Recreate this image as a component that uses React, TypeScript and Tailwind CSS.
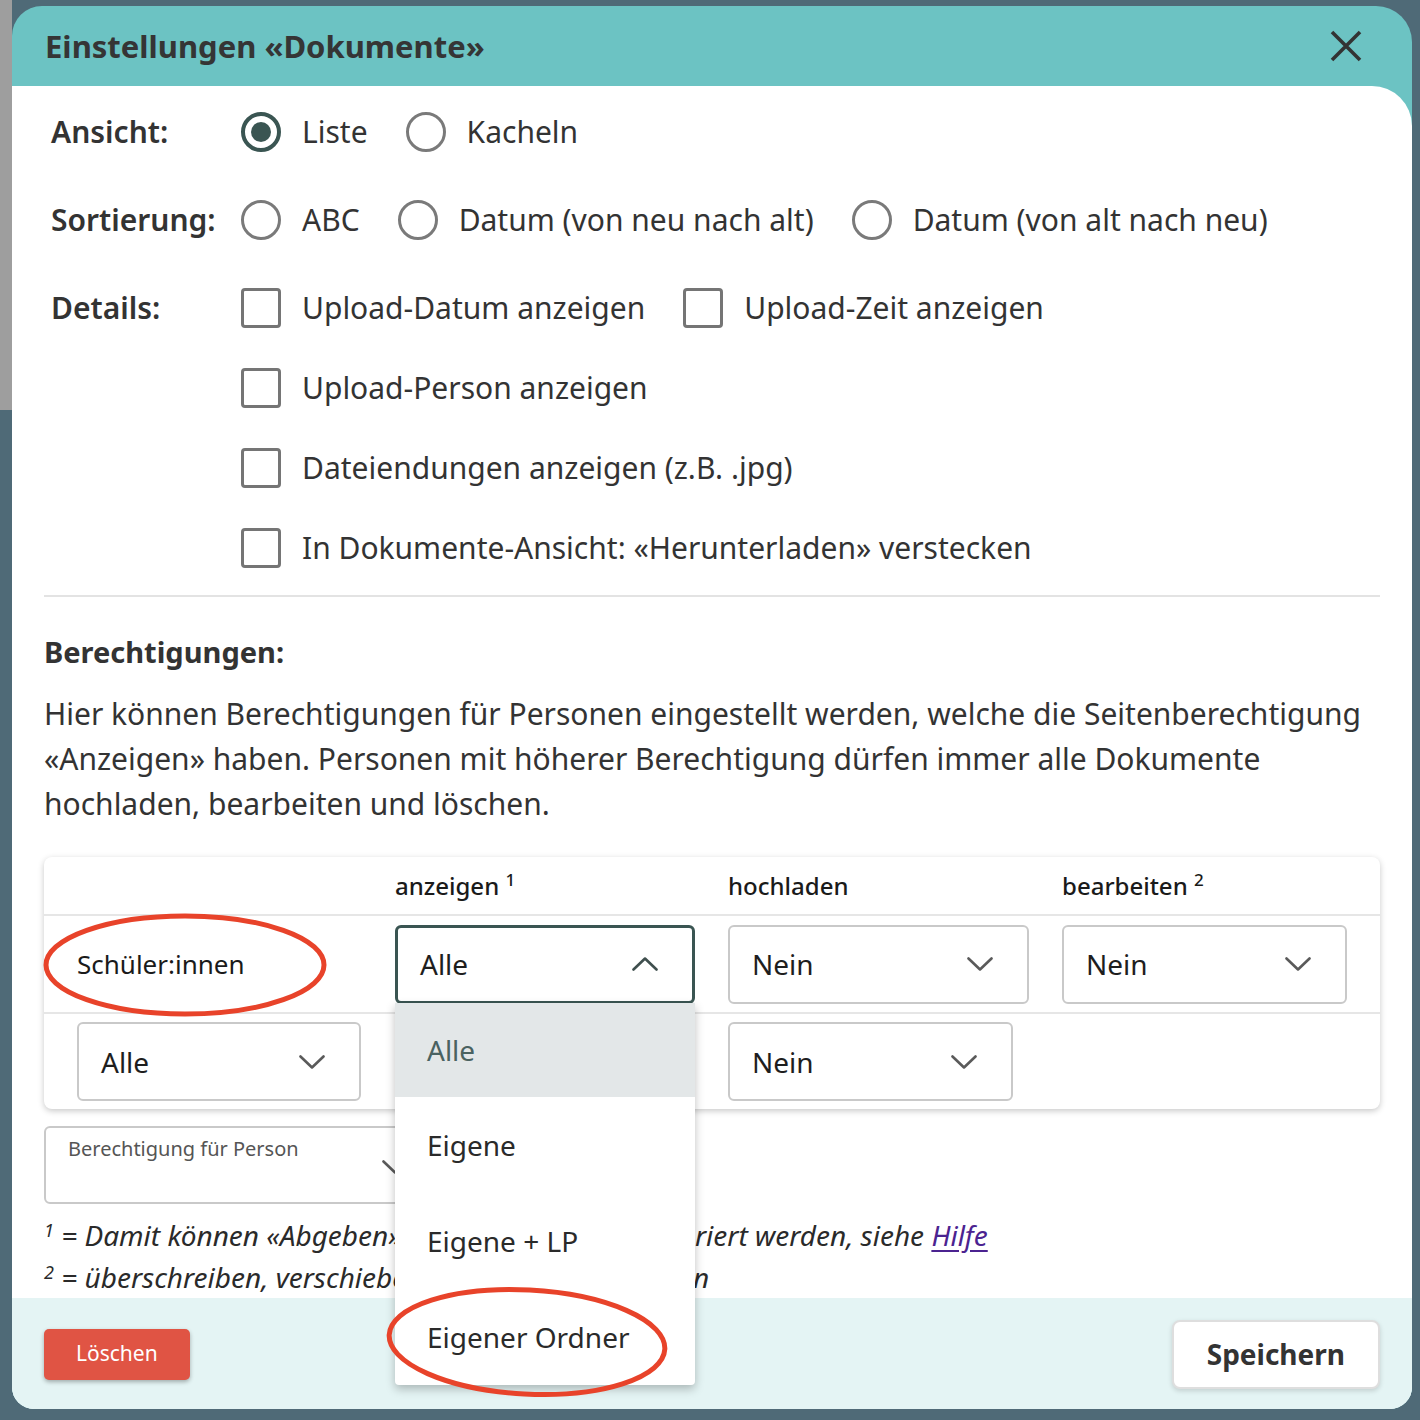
import React from "react";

const FONT = { fontFamily: "'Noto Sans', Roboto, sans-serif" };

function Chevron({ up = false }: { up?: boolean }) {
  return (
    <svg width="26" height="14" viewBox="0 0 26 14" fill="none">
      <path
        d={up ? "M1.5 12.5 L13 1.5 L24.5 12.5" : "M1.5 1.5 L13 12.5 L24.5 1.5"}
        stroke={up ? "#3f4f4e" : "#5a5a5a"}
        strokeWidth="2.6"
        strokeLinecap="round"
        strokeLinejoin="round"
      />
    </svg>
  );
}

function Radio({ label, checked = false }: { label: string; checked?: boolean }) {
  return (
    <div className="h-[40px] flex items-center gap-[21px]">
      {checked ? (
        <span className="w-[40px] h-[40px] rounded-full border-[4px] border-[#3a5552] flex items-center justify-center">
          <span className="w-[20px] h-[20px] rounded-full bg-[#3a5552]" />
        </span>
      ) : (
        <span className="w-[40px] h-[40px] rounded-full border-[3px] border-[#7a7a7a]" />
      )}
      <span className="text-[30px] leading-none text-[#333]">{label}</span>
    </div>
  );
}

function Check({ label }: { label: string }) {
  return (
    <div className="h-[40px] flex items-center gap-[21px]">
      <span className="w-[40px] h-[40px] rounded-[4px] border-[3px] border-[#757575]" />
      <span className="text-[30px] leading-none text-[#333]">{label}</span>
    </div>
  );
}

function Select({
  value,
  width,
  open = false,
}: {
  value: string;
  width: string;
  open?: boolean;
}) {
  return (
    <div
      className={`${width} h-[79px] rounded-[6px] flex items-center justify-between pl-[22px] pr-[34px] bg-white ${
        open ? "border-[3px] border-[#3a5552]" : "border-2 border-[#c9c9c9]"
      }`}
    >
      <span className="text-[28px] text-[#1e1e1e]">{value}</span>
      <Chevron up={open} />
    </div>
  );
}

const MENU = ["Alle", "Eigene", "Eigene + LP", "Eigener Ordner"];

export default function App() {
  return (
    <div className="w-[1420px] h-[1420px] bg-[#4f6a77] flex" style={FONT}>
      <div className="w-[12px] flex flex-col">
        <div className="h-[410px] bg-[#9e9e9e]" />
      </div>

      <div className="pt-[6px]">
        <div className="relative w-[1400px] h-[1403px] bg-[#6cc3c3] rounded-tl-[30px] rounded-tr-[36px] rounded-b-[22px] overflow-hidden flex flex-col">
          {/* header */}
          <div className="h-[80px] shrink-0 flex items-center justify-between pl-[33px] pr-[50px]">
            <h1 className="text-[31px] font-bold text-[#353535]">Einstellungen «Dokumente»</h1>
            <svg width="32" height="32" viewBox="0 0 32 32">
              <path d="M2 2 L30 30 M30 2 L2 30" stroke="#333" strokeWidth="3.6" />
            </svg>
          </div>

          {/* body */}
          <div className="flex-1 bg-white rounded-tr-[40px] flex flex-col">
            <div className="px-[32px] pt-[26px]">
              <div className="pl-[7px] flex flex-col gap-[48px]">
                <div className="h-[40px] flex items-center">
                  <span className="w-[190px] text-[30px] leading-none font-semibold text-[#333]">
                    Ansicht:
                  </span>
                  <div className="flex items-center gap-[38px]">
                    <Radio label="Liste" checked />
                    <Radio label="Kacheln" />
                  </div>
                </div>
                <div className="h-[40px] flex items-center">
                  <span className="w-[190px] text-[30px] leading-none font-semibold text-[#333]">
                    Sortierung:
                  </span>
                  <div className="flex items-center gap-[38px]">
                    <Radio label="ABC" />
                    <Radio label="Datum (von neu nach alt)" />
                    <Radio label="Datum (von alt nach neu)" />
                  </div>
                </div>
                <div className="flex items-start">
                  <span className="w-[190px] h-[40px] flex items-center text-[30px] leading-none font-semibold text-[#333]">
                    Details:
                  </span>
                  <div className="flex flex-col gap-[40px]">
                    <div className="flex items-center gap-[38px]">
                      <Check label="Upload-Datum anzeigen" />
                      <Check label="Upload-Zeit anzeigen" />
                    </div>
                    <Check label="Upload-Person anzeigen" />
                    <Check label="Dateiendungen anzeigen (z.B. .jpg)" />
                    <Check label="In Dokumente-Ansicht: «Herunterladen» verstecken" />
                  </div>
                </div>
              </div>

              <div className="h-[2px] bg-[#e3e3e3] mt-[27px]" />

              <h2 className="mt-[36px] text-[29px] leading-[38px] font-bold text-[#333]">
                Berechtigungen:
              </h2>
              <p className="mt-[20px] text-[30px] leading-[45px] text-[#333]">
                Hier können Berechtigungen für Personen eingestellt werden, welche die
                Seitenberechtigung «Anzeigen» haben. Personen mit höherer Berechtigung dürfen
                immer alle Dokumente hochladen, bearbeiten und löschen.
              </p>

              {/* permissions table */}
              <div className="mt-[31px] rounded-[8px] bg-white shadow-[0_2px_6px_rgba(0,0,0,0.22)]">
                <div className="h-[57px] grid grid-cols-[351px_333px_334px_1fr] items-center text-[24px] text-[#1a1a1a] font-medium">
                  <span />
                  <span>
                    anzeigen <sup className="text-[17px]">1</sup>
                  </span>
                  <span>hochladen</span>
                  <span>
                    bearbeiten <sup className="text-[17px]">2</sup>
                  </span>
                </div>
                <div className="h-[98px] border-t-2 border-[#e6e6e6] grid grid-cols-[351px_333px_334px_1fr] items-center">
                  <span className="pl-[33px] text-[26px] text-[#1a1a1a]">Schüler:innen</span>
                  <Select value="Alle" width="w-[300px]" open />
                  <Select value="Nein" width="w-[301px]" />
                  <Select value="Nein" width="w-[285px]" />
                </div>
                <div className="h-[97px] border-t-2 border-[#e6e6e6] grid grid-cols-[351px_333px_334px_1fr] items-center">
                  <div className="pl-[33px]">
                    <Select value="Alle" width="w-[284px]" />
                  </div>
                  <Select value="Alle" width="w-[300px]" />
                  <Select value="Nein" width="w-[285px]" />
                  <span />
                </div>
              </div>

              <div className="mt-[17px] w-[380px] h-[78px] rounded-[6px] border-2 border-[#c9c9c9] flex justify-between pl-[22px] pr-[14px] pt-[6px]">
                <span className="text-[20px] text-[#555]">Berechtigung für Person</span>
                <span className="pt-[26px]">
                  <Chevron />
                </span>
              </div>

              <div className="mt-[10px] text-[28px] italic leading-[42px] text-[#2a2a2a]">
                <p>
                  <sup className="text-[18px]">1</sup> = Damit können «Abgeben»-Ordner für alle
                  konfiguriert werden, siehe{" "}
                  <span className="text-[#4b2390] underline underline-offset-4">Hilfe</span>
                </p>
                <p>
                  <sup className="text-[18px]">2</sup> = überschreiben, verschieben, umbenennen, löschen
                </p>
              </div>
            </div>

            {/* footer */}
            <div className="mt-auto h-[112px] shrink-0 bg-[#e4f4f4] flex items-center justify-between px-[32px]">
              <button className="h-[51px] px-[32px] rounded-[5px] bg-[#e05444] text-white text-[21px] shadow-[0_2px_4px_rgba(0,0,0,0.3)]">
                Löschen
              </button>
              <button className="h-[69px] px-[33px] rounded-[8px] bg-white border-2 border-[#dedede] text-[28px] font-bold text-[#333] shadow-[0_2px_5px_rgba(0,0,0,0.15)]">
                Speichern
              </button>
            </div>
          </div>

          {/* open dropdown menu */}
          <div className="absolute left-[383px] top-[997px] w-[300px] bg-white rounded-b-[4px] shadow-[0_4px_10px_rgba(0,0,0,0.25)] flex flex-col">
            {MENU.map((m, i) => (
              <div
                key={m}
                className={`flex items-center pl-[32px] text-[28px] ${
                  i === 0 ? "h-[94px] bg-[#e3e7e8] text-[#4a6261]" : "h-[96px] text-[#2a2a2a]"
                }`}
              >
                {m}
              </div>
            ))}
          </div>

          {/* red annotation ellipses */}
          <svg className="absolute left-[30px] top-[900px] pointer-events-none" width="290" height="116" viewBox="0 0 290 116">
            <ellipse cx="143" cy="59" rx="139" ry="49" fill="none" stroke="#e8432a" strokeWidth="5" />
          </svg>
          <svg className="absolute left-[373px] top-[1280px] pointer-events-none" width="290" height="124" viewBox="0 0 290 124">
            <ellipse cx="142" cy="56" rx="138" ry="52" fill="none" stroke="#e8432a" strokeWidth="5" transform="rotate(3 142 56)" />
          </svg>
        </div>
      </div>
    </div>
  );
}
